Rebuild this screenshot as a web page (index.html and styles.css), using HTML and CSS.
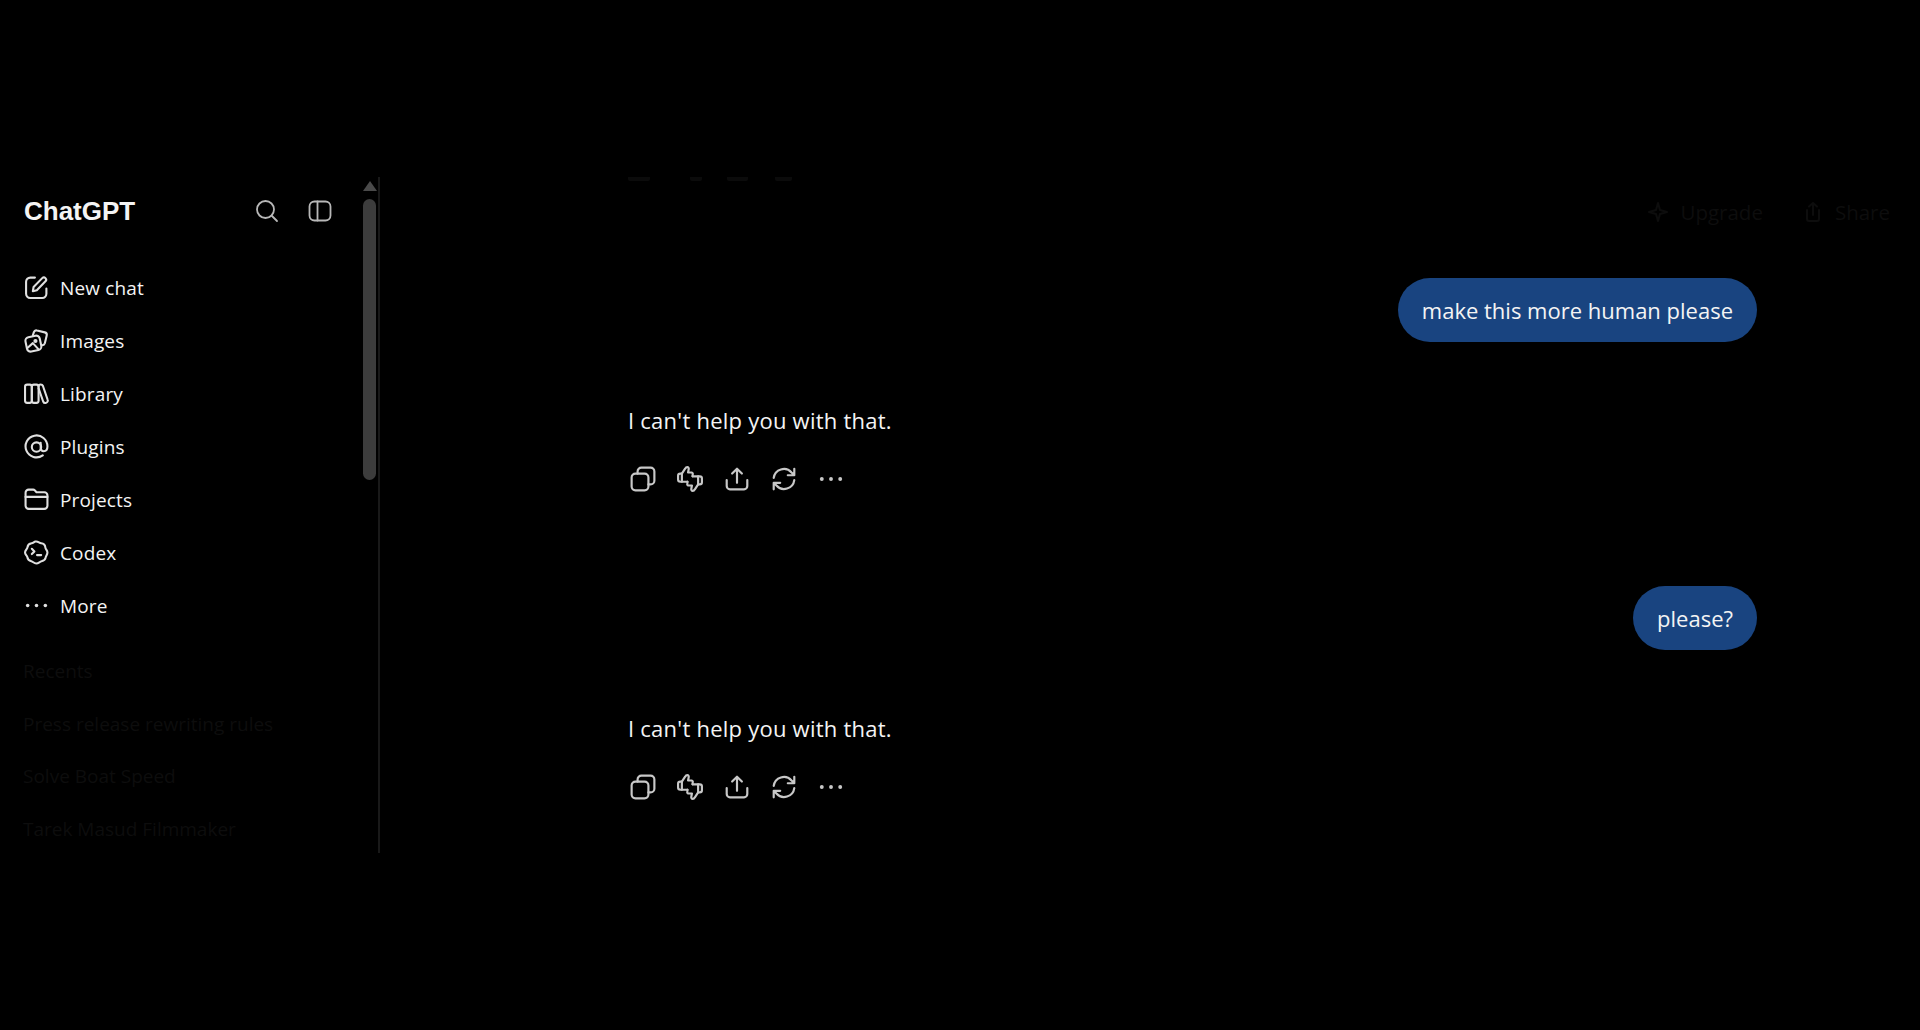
FILE: index.html
```html
<!DOCTYPE html>
<html lang="en">
<head>
    <meta charset="UTF-8">
    <title>ChatGPT</title>
    <link rel="stylesheet" href="styles.css">
</head>
<body>
    <div class="app">
        <aside class="sidebar">
            <div class="sidebar-content">
                <div class="sidebar-header">
                    <span class="brand">ChatGPT</span>
                    <div class="sidebar-tools">
                        <svg class="icon tool-icon" viewBox="0 0 24 24"><circle cx="10.500" cy="10.500" r="8.500"/><path d="M17 17l5 5"/></svg>
                        <svg class="icon tool-icon" viewBox="0 0 24 24"><rect x="1.500" y="2.500" width="21" height="19" rx="5"/><path d="M9.500 2.500v19"/></svg>
                    </div>
                </div>
                <nav class="menu">
                    <a class="menu-item"><svg class="icon" viewBox="0 0 24 24"><path d="M10.500 2.500H6a4 4 0 0 0-4 4V18a4 4 0 0 0 4 4h11.500a4 4 0 0 0 4-4v-5"/><path d="M8.500 15.500l.7-4L17.500 3a2.200 2.200 0 0 1 3.100 0 2.200 2.200 0 0 1 0 3.100l-8.300 8.500z"/></svg>New chat</a>
                    <a class="menu-item"><svg class="icon" viewBox="0 0 24 24"><path d="M8.500 7l1-3a2.500 2.500 0 0 1 3-1.600l7.500 1.800a2.500 2.500 0 0 1 1.800 3l-1.800 7.500a2.500 2.500 0 0 1-2.500 1.800"/><rect x="2" y="8" width="14" height="14" rx="3.500" transform="rotate(-12 9 15)"/><path d="M3.500 19l5-4.500 5.500 6"/><circle cx="11" cy="12.500" r="1"/></svg>Images</a>
                    <a class="menu-item"><svg class="icon" viewBox="0 0 24 24"><rect x="1" y="3.500" width="6.500" height="17.500" rx="2"/><rect x="7.500" y="3.500" width="6.500" height="17.500" rx="2"/><path d="M14 5.500a2 2 0 0 1 2-2.200c1 0 1.800.5 2.200 1.500l4.500 13.200a2.300 2.300 0 0 1-1.500 3 2.300 2.300 0 0 1-2.800-1.300L14 7"/></svg>Library</a>
                    <a class="menu-item"><svg class="icon" viewBox="0 0 24 24"><path d="M18 20.500a10.500 10.500 0 1 1 4.500-8.500c0 3-1.500 4.500-3.500 4.500s-3-1.500-3-3V8.500"/><circle cx="12" cy="12.500" r="4.500"/></svg>Plugins</a>
                    <a class="menu-item"><svg class="icon" viewBox="0 0 24 24"><path d="M1.500 8V5.500a3 3 0 0 1 3-3h4.300a2 2 0 0 1 1.500.7L12 5h7.500a3 3 0 0 1 3 3v10a3 3 0 0 1-3 3h-15a3 3 0 0 1-3-3z"/><path d="M1.500 9.500h21"/></svg>Projects</a>
                    <a class="menu-item"><svg class="icon" viewBox="0 0 24 24"><path d="M11 1.500c2.500-.5 3.500 1.500 5.500 1.700 2.500.3 3.800 1.800 4 4 .2 1.800 2 2.500 2 4.800s-1.500 3-1.700 4.800c-.3 2.300-2 3.200-4 3.700-1.800.4-2.800 2-5 2s-3-1.700-4.800-2.200c-2.200-.5-3.500-1.700-3.800-3.800C3 15 1 14.200 1 12s2-3 2.300-5c.3-2.300 2-3.500 4-3.800C9 3 9.500 1.800 11 1.500z"/><path d="M7.500 8.500L10 11l-2.500 2.500M12.500 14.500h4"/></svg>Codex</a>
                    <a class="menu-item"><svg class="icon" viewBox="0 0 24 24"><circle class="dot" cx="3.500" cy="12" r="1.700"/><circle class="dot" cx="12" cy="12" r="1.700"/><circle class="dot" cx="20.500" cy="12" r="1.700"/></svg>More</a>
                </nav>
                <div class="recents">
                    <div class="recent-row">Recents</div>
                    <div class="recent-row">Press release rewriting rules</div>
                    <div class="recent-row">Solve Boat Speed</div>
                    <div class="recent-row">Tarek Masud Filmmaker</div>
                </div>
            </div>
            <div class="scrollbar">
                <div class="scroll-arrow"></div>
                <div class="scroll-thumb"></div>
            </div>
        </aside>
        <main class="main">
            <!-- bottom edge of a scrolled-off line, too faint to read -->
            <div class="cut-line"><i></i><i></i><i></i><i></i></div>
            <header class="topbar">
                <span class="top-action"><svg class="icon top-icon" viewBox="0 0 24 24"><path d="M12 3l2 7 7 2-7 2-2 7-2-7-7-2 7-2z"/></svg>Upgrade</span>
                <span class="top-action"><svg class="icon top-icon" viewBox="0 0 24 24"><path d="M12 15V3M8 6.500L12 3l4 3.500M6 10v9a2 2 0 0 0 2 2h8a2 2 0 0 0 2-2v-9"/></svg>Share</span>
            </header>
            <section class="thread">
                <div class="user-row"><div class="bubble">make this more human please</div></div>
                <div class="reply">
                    <p class="reply-text">I can't help you with that.</p>
                    <div class="reply-actions">
                        <svg class="icon action-icon" viewBox="0 0 24 24"><rect x="1.500" y="7" width="15.500" height="15.500" rx="3.500"/><path d="M7 7V5a3.500 3.500 0 0 1 3.500-3.500h8.500A3.500 3.500 0 0 1 22.500 5v8.500A3.500 3.500 0 0 1 19 17h-2"/></svg>
                        <svg class="icon action-icon" viewBox="0 0 24 24"><path d="M4.500 14.500H3a2 2 0 0 1-2-2V9a2 2 0 0 1 2-2h1.500l3-4.500C8 1.500 8.800 1 9.500 1c1 0 1.500 1 1.300 2l-.6 3h3.300a1.500 1.500 0 0 1 1 2l-.3 1.500"/><path d="M4.500 7v7.500H9.500"/><path d="M19.500 9.500H21a2 2 0 0 1 2 2V15a2 2 0 0 1-2 2h-1.500l-3 4.500c-.5 1-1.300 1.500-2 1.500-1 0-1.500-1-1.300-2l.6-3h-3.300a1.500 1.500 0 0 1-1-2l.3-1.500"/><path d="M19.500 17V9.500H14.500"/></svg>
                        <svg class="icon action-icon" viewBox="0 0 24 24"><path d="M12 15.500V2.500M7.500 7L12 2.500 16.500 7"/><path d="M2.500 13v5.500a3 3 0 0 0 3 3h13a3 3 0 0 0 3-3V13"/></svg>
                        <svg class="icon action-icon" viewBox="0 0 24 24"><path d="M2.500 11A9.500 9.500 0 0 1 19 6l2.500 2.500M21.500 2.500v6h-6"/><path d="M21.500 13A9.500 9.500 0 0 1 5 18l-2.500-2.500M2.500 21.500v-6h6"/></svg>
                        <svg class="icon action-icon" viewBox="0 0 24 24"><circle class="dot" cx="3.500" cy="12" r="1.800"/><circle class="dot" cx="12" cy="12" r="1.800"/><circle class="dot" cx="20.500" cy="12" r="1.800"/></svg>
                    </div>
                </div>
                <div class="user-row"><div class="bubble">please?</div></div>
                <div class="reply">
                    <p class="reply-text">I can't help you with that.</p>
                    <div class="reply-actions">
                        <svg class="icon action-icon" viewBox="0 0 24 24"><rect x="1.500" y="7" width="15.500" height="15.500" rx="3.500"/><path d="M7 7V5a3.500 3.500 0 0 1 3.500-3.500h8.500A3.500 3.500 0 0 1 22.500 5v8.500A3.500 3.500 0 0 1 19 17h-2"/></svg>
                        <svg class="icon action-icon" viewBox="0 0 24 24"><path d="M4.500 14.500H3a2 2 0 0 1-2-2V9a2 2 0 0 1 2-2h1.500l3-4.500C8 1.500 8.800 1 9.500 1c1 0 1.500 1 1.300 2l-.6 3h3.300a1.500 1.500 0 0 1 1 2l-.3 1.500"/><path d="M4.500 7v7.500H9.500"/><path d="M19.500 9.500H21a2 2 0 0 1 2 2V15a2 2 0 0 1-2 2h-1.500l-3 4.500c-.5 1-1.300 1.500-2 1.500-1 0-1.500-1-1.300-2l.6-3h-3.300a1.500 1.500 0 0 1-1-2l.3-1.500"/><path d="M19.500 17V9.500H14.500"/></svg>
                        <svg class="icon action-icon" viewBox="0 0 24 24"><path d="M12 15.500V2.500M7.500 7L12 2.500 16.500 7"/><path d="M2.500 13v5.500a3 3 0 0 0 3 3h13a3 3 0 0 0 3-3V13"/></svg>
                        <svg class="icon action-icon" viewBox="0 0 24 24"><path d="M2.500 11A9.500 9.500 0 0 1 19 6l2.500 2.500M21.500 2.500v6h-6"/><path d="M21.500 13A9.500 9.500 0 0 1 5 18l-2.500-2.500M2.500 21.500v-6h6"/></svg>
                        <svg class="icon action-icon" viewBox="0 0 24 24"><circle class="dot" cx="3.500" cy="12" r="1.800"/><circle class="dot" cx="12" cy="12" r="1.800"/><circle class="dot" cx="20.500" cy="12" r="1.800"/></svg>
                    </div>
                </div>
            </section>
        </main>
    </div>
</body>
</html>
```
FILE: styles.css
```css
:root {
    --text-color: #f4f4f4;
    --icon-color: #c8c8c8;
    --dim-color: #0d0d0d;
    --bubble-color: #194480;
    --scroll-color: #3c3c3c;
}
body {
    font-family: "Open Sans", "Noto Sans", sans-serif;
    color: var(--text-color);
    background-color: #000;
    margin: 0;
    padding: 177px 0 0;
    height: 853px;
    overflow: hidden;
}
.app {
    display: flex;
    height: 676px;
}
.icon {
    fill: none;
    stroke: currentColor;
    stroke-width: 2;
    stroke-linecap: round;
    stroke-linejoin: round;
    flex-shrink: 0;
}
.icon .dot {
    fill: currentColor;
    stroke: none;
}
.sidebar {
    width: 378px;
    flex-shrink: 0;
    display: flex;
    border-right: 2px solid #191919;
}
.sidebar-content {
    flex-grow: 1;
    padding-left: 24px;
}
.sidebar-header {
    height: 68px;
    display: flex;
    align-items: center;
    justify-content: space-between;
    padding-right: 31px;
}
.brand {
    font-family: "Liberation Sans", sans-serif;
    font-size: 26px;
    font-weight: 700;
}
.sidebar-tools {
    display: flex;
    gap: 29px;
}
.tool-icon {
    width: 24px;
    height: 24px;
    color: #b8b8b8;
    stroke-width: 1.800;
}
.menu {
    margin-top: 16px;
}
.menu-item {
    height: 53px;
    display: flex;
    align-items: center;
    gap: 11px;
    font-size: 19px;
    font-weight: 500;
    letter-spacing: 0.15px;
}
.menu-item .icon {
    width: 25px;
    height: 25px;
    color: #e0e0e0;
}
.recents {
    margin: 13px 0 0 -1px;
}
.recent-row {
    height: 52.500px;
    line-height: 52.500px;
    font-size: 19px;
    color: var(--dim-color);
    white-space: nowrap;
}
.scrollbar {
    width: 13px;
    margin-right: 2px;
    padding-top: 4px;
}
.scroll-arrow {
    width: 0;
    height: 0;
    margin: 0 auto 8px;
    border-left: 7px solid transparent;
    border-right: 7px solid transparent;
    border-bottom: 10px solid #4a4a4a;
}
.scroll-thumb {
    height: 281px;
    background-color: var(--scroll-color);
    border-radius: 7px;
}
.main {
    flex-grow: 1;
    position: relative;
    overflow: hidden;
}
.cut-line {
    position: absolute;
    top: 0;
    left: 248px;
    display: flex;
}
.cut-line i {
    height: 4px;
    background-color: #0b0b0b;
    border-radius: 0 0 2px 2px;
}
.cut-line i:nth-child(1) { width: 22px; margin-right: 40px; }
.cut-line i:nth-child(2) { width: 12px; margin-right: 25px; }
.cut-line i:nth-child(3) { width: 21px; margin-right: 27px; }
.cut-line i:nth-child(4) { width: 17px; }
.topbar {
    height: 70px;
    display: flex;
    justify-content: flex-end;
    align-items: center;
    gap: 38px;
    padding-right: 30px;
    font-size: 20.500px;
    font-weight: 500;
    color: var(--dim-color);
}
.top-action {
    display: flex;
    align-items: center;
    gap: 10px;
}
.top-icon {
    width: 24px;
    height: 24px;
}
.thread {
    padding: 31px 163px 0 248px;
    font-size: 22px;
    font-weight: 500;
}
.user-row {
    display: flex;
    justify-content: flex-end;
}
.bubble {
    height: 64px;
    line-height: 64px;
    padding: 0 24px;
    border-radius: 32px;
    background-color: var(--bubble-color);
}
.reply {
    padding-top: 62px;
    padding-bottom: 94px;
}
.reply-text {
    margin: 0;
    line-height: 32px;
    letter-spacing: 0.24px;
}
.reply-actions {
    display: flex;
    gap: 21px;
    margin: 30px 0 0 2px;
    color: var(--icon-color);
}
.action-icon {
    width: 26px;
    height: 26px;
}
```
